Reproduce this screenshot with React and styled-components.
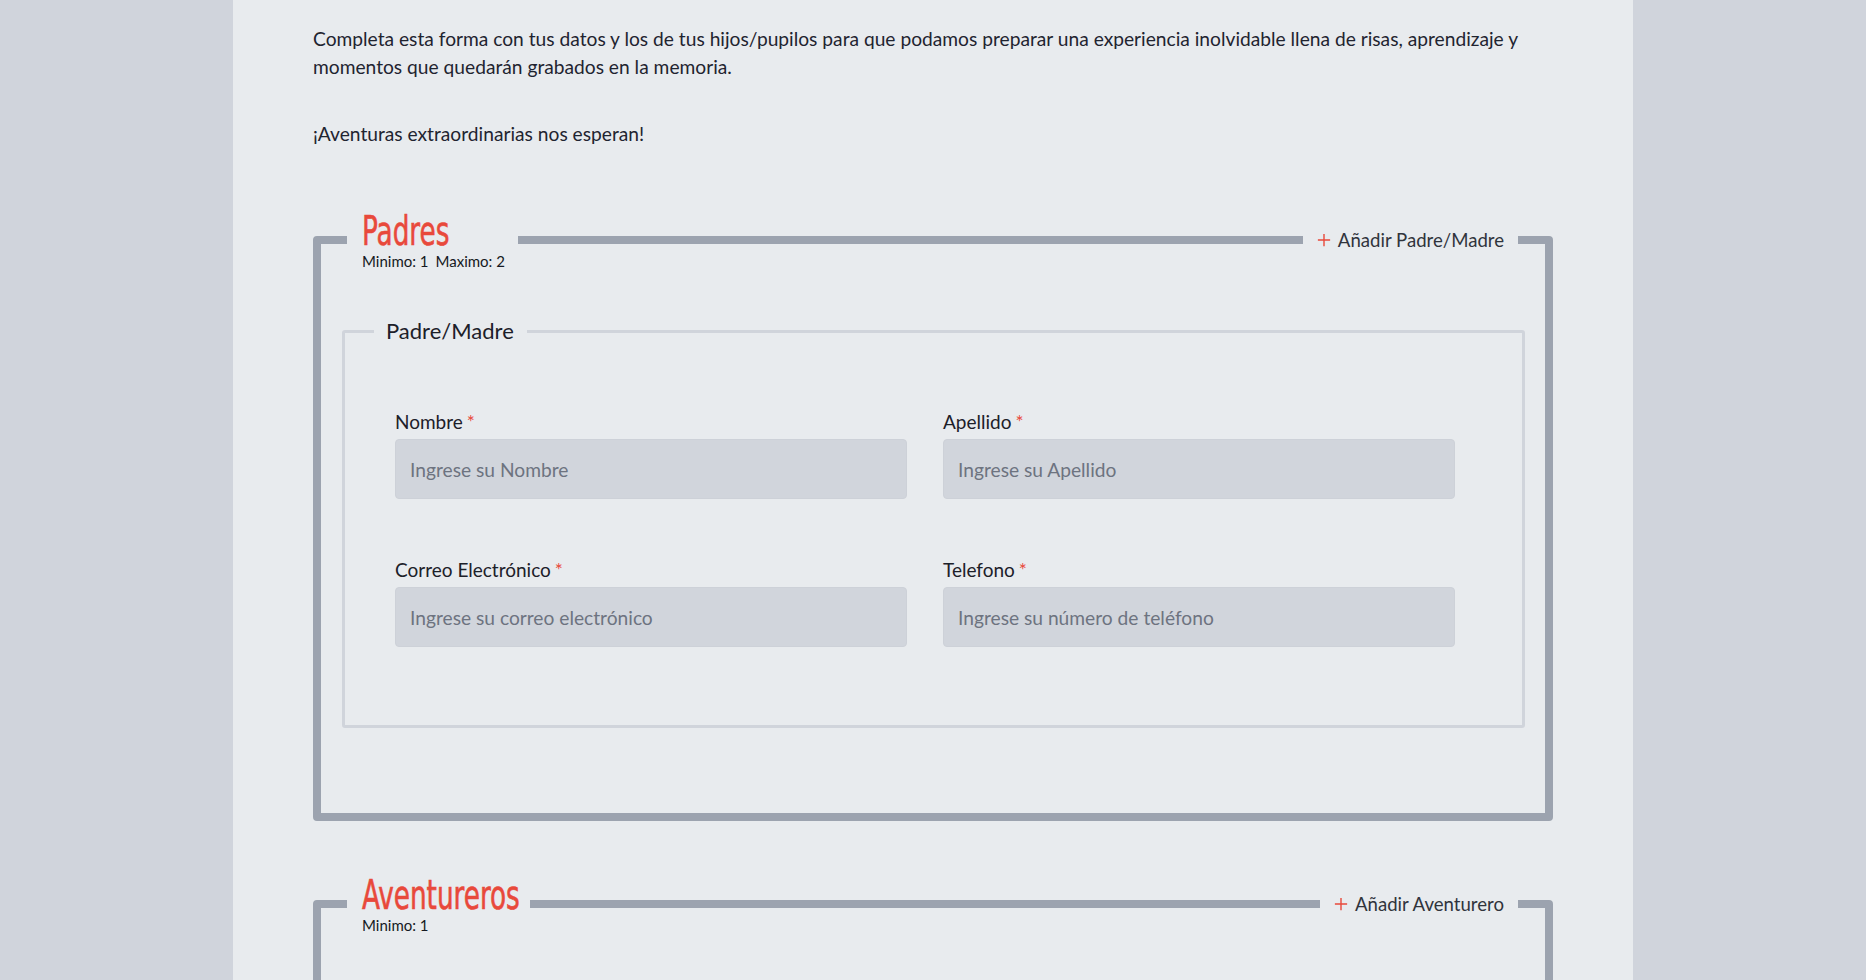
import React from 'react'
import styled, { createGlobalStyle } from 'styled-components'

const GlobalStyle = createGlobalStyle`
  html, body {
    margin: 0;
    padding: 0;
    background: #d0d4dc;
  }
  body {
    font-family: 'Lato', 'Open Sans', 'Noto Sans', sans-serif;
    color: #1f2430;
  }
  * {
    box-sizing: border-box;
  }
`

const Page = styled.main`
  width: 1400px;
  min-height: 980px;
  margin: 0 auto;
  background: #e8ebee;
  padding: 25px 80px 40px;
`

const Intro = styled.p`
  margin: 0 0 39px;
  font-size: 19.2px;
  line-height: 28px;
`

const Group = styled.section`
  position: relative;
  margin-top: ${props => props.$top || 53}px;
`

const GroupBox = styled.fieldset`
  margin: 0;
  border: 8px solid #9ca3af;
  border-radius: 4px;
  padding: 46px 20px 85px 21px;
  min-height: ${props => props.$minHeight || 0}px;
`

const GroupLegend = styled.legend`
  margin-left: 5px;
  padding: 0 13px 0 15px;
`

const GroupTitle = styled.span`
  display: block;
  width: ${props => props.$width}px;
  height: 42px;
  font-family: 'DejaVu Sans Condensed', 'DejaVu Sans', sans-serif;
  font-size: 40px;
  line-height: 42px;
  color: #e8493b;
  -webkit-text-stroke: 0.6px #e8493b;
  white-space: nowrap;
`

const TitleText = styled.span`
  display: inline-block;
  transform: scaleX(0.73);
  transform-origin: 0 50%;
`

const Limits = styled.span`
  display: flex;
  gap: 7px;
  font-size: 15px;
  line-height: 18px;
  color: #151922;
`

const AddButton = styled.button`
  position: absolute;
  top: 16px;
  right: 35px;
  display: flex;
  align-items: center;
  gap: 7px;
  height: 28px;
  padding: 0 14px;
  border: none;
  background: #e8ebee;
  font-family: inherit;
  font-size: 18.6px;
  color: #30343c;
  cursor: pointer;

  svg {
    width: 14px;
    height: 14px;
  }
`

const Member = styled.fieldset`
  margin: 0;
  border: 3px solid #d0d4db;
  border-radius: 3px;
  padding: 64px 20px 78px 0;
`

const MemberLegend = styled.legend`
  margin-left: 29px;
  padding: 0 13px 0 12px;
  font-size: 22px;
  line-height: 30px;
  color: #1c2029;
`

const Fields = styled.div`
  display: grid;
  grid-template-columns: 512px 512px;
  column-gap: 36px;
  row-gap: 59px;
  padding-left: 50px;
`

const Field = styled.label`
  display: flex;
  flex-direction: column;
  gap: 5px;
`

const LabelText = styled.span`
  font-size: 19px;
  line-height: 24px;
  color: #1c2029;
`

const Required = styled.span`
  margin-left: 4px;
  color: #e8493b;
`

const Input = styled.input`
  height: 60px;
  padding: 0 14px;
  border: 1px solid #cdd1d8;
  border-radius: 4px;
  background: #d1d5dc;
  font-family: inherit;
  font-size: 19.2px;
  color: #1f2430;
  outline: none;

  &::placeholder {
    color: #6d7380;
  }
`

const Plus = () => (
  <svg viewBox="0 0 16 16" fill="none" stroke="#e8493b" strokeWidth="1.6">
    <path d="M8 1v14M1 8h14" />
  </svg>
)

const fields = [
  { label: 'Nombre', placeholder: 'Ingrese su Nombre' },
  { label: 'Apellido', placeholder: 'Ingrese su Apellido' },
  { label: 'Correo Electrónico', placeholder: 'Ingrese su correo electrónico', type: 'email' },
  { label: 'Telefono', placeholder: 'Ingrese su número de teléfono', type: 'tel' },
]

const App = () => (
  <>
    <GlobalStyle />
    <Page>
      <Intro>
        Completa esta forma con tus datos y los de tus hijos/pupilos para que podamos preparar una
        experiencia inolvidable llena de risas, aprendizaje y momentos que quedarán grabados en la
        memoria.
      </Intro>
      <Intro>¡Aventuras extraordinarias nos esperan!</Intro>

      <Group $top={62}>
        <GroupBox>
          <GroupLegend>
            <GroupTitle $width={86}>
              <TitleText>Padres</TitleText>
            </GroupTitle>
            <Limits>
              <span>Minimo: 1</span>
              <span>Maximo: 2</span>
            </Limits>
          </GroupLegend>

          <Member>
            <MemberLegend>Padre/Madre</MemberLegend>
            <Fields>
              {fields.map(f => (
                <Field key={f.label}>
                  <LabelText>
                    {f.label}
                    <Required>*</Required>
                  </LabelText>
                  <Input type={f.type || 'text'} placeholder={f.placeholder} />
                </Field>
              ))}
            </Fields>
          </Member>
        </GroupBox>
        <AddButton type="button">
          <Plus />
          Añadir Padre/Madre
        </AddButton>
      </Group>

      <Group>
        <GroupBox $minHeight={200}>
          <GroupLegend>
            <GroupTitle $width={155}>
              <TitleText>Aventureros</TitleText>
            </GroupTitle>
            <Limits>
              <span>Minimo: 1</span>
            </Limits>
          </GroupLegend>
        </GroupBox>
        <AddButton type="button">
          <Plus />
          Añadir Aventurero
        </AddButton>
      </Group>
    </Page>
  </>
)

export default App
